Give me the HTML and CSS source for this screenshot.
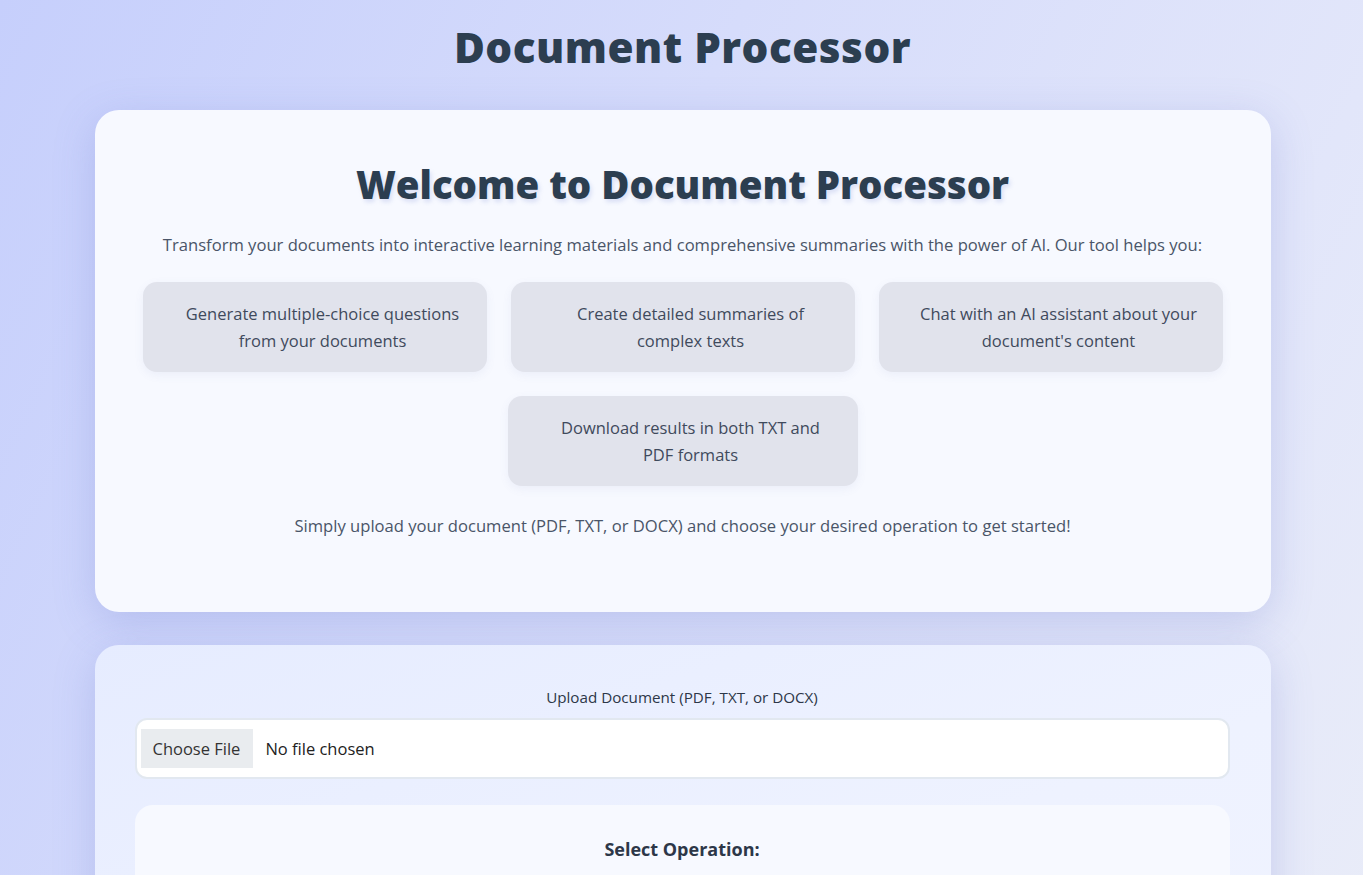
FILE: index.html
```html
<!DOCTYPE html>
<html lang="en">
<head>
<meta charset="utf-8">
<title>Document Processor</title>
<link rel="stylesheet" href="styles.css">
</head>
<body>
<div class="page">
  <h1 class="title">Document Processor</h1>

  <section class="card welcome">
    <h2 class="welcome-title">Welcome to Document Processor</h2>
    <p class="intro">Transform your documents into interactive learning materials and comprehensive summaries with the power of AI. Our tool helps you:</p>
    <ul class="features">
      <li class="feature">Generate multiple-choice questions from your documents</li>
      <li class="feature">Create detailed summaries of complex texts</li>
      <li class="feature">Chat with an AI assistant about your document's content</li>
      <li class="feature">Download results in both TXT and PDF formats</li>
    </ul>
    <p class="intro outro">Simply upload your document (PDF, TXT, or DOCX) and choose your desired operation to get started!</p>
  </section>

  <section class="card upload">
    <label class="upload-label" for="doc">Upload Document (PDF, TXT, or DOCX)</label>
    <input class="file-input" id="doc" type="file">
    <div class="ops">
      <h3 class="ops-title">Select Operation:</h3>
    </div>
  </section>
</div>
</body>
</html>
```
FILE: styles.css
```css
* { box-sizing: border-box; }

html, body {
  margin: 0;
  padding: 0;
}

body {
  min-height: 100vh;
  font-family: "Open Sans", "Noto Sans", sans-serif;
  color: #2d3748;
  background: linear-gradient(115deg, #c6cffc 0%, #d6dcfb 40%, #e2e6fa 75%, #eaedf8 100%);
}

.page {
  width: 1176px;
  margin: 0 auto;
  padding: 20px 0 40px;
  position: relative;
  left: 1px;
}

.title {
  margin: 0 0 36px;
  text-align: center;
  font-family: "Open Sans", sans-serif;
  font-weight: 800;
  font-size: 42.2px;
  line-height: 54px;
  color: #2c3e50;
  letter-spacing: 0.5px;
}

.card {
  border-radius: 24px;
  box-shadow: 0 10px 40px rgba(110, 125, 210, 0.28);
}

.welcome {
  background: #f7f9ff;
  padding: 48px 48px 73px;
  text-align: center;
}

.welcome-title {
  margin: 0 0 22px;
  font-family: "Open Sans", sans-serif;
  font-weight: 800;
  font-size: 38.4px;
  line-height: 52px;
  color: #2c3e50;
  text-shadow: 2px 3px 4px rgba(90, 110, 200, 0.18);
}

.intro {
  margin: 0;
  font-size: 16.6px;
  line-height: 26px;
  color: #4a5568;
}

.features {
  list-style: none;
  margin: 24px 0 24px;
  padding: 0;
  display: flex;
  flex-wrap: wrap;
  justify-content: center;
  gap: 24px;
}

.feature {
  flex: 1 1 300px;
  max-width: 350px;
  background: #e1e3ec;
  border-radius: 14px;
  padding: 18px 24px 18px 40px;
  font-size: 16.5px;
  line-height: 27px;
  color: #3f4a5c;
  box-shadow: 0 3px 10px rgba(100, 110, 180, 0.08);
}

.outro {
  margin-top: 27px;
}

.upload {
  margin-top: 33px;
  background: linear-gradient(160deg, #e6ecff 0%, #eef2ff 60%, #f0f3ff 100%);
  padding: 40px 41px 40px 40px;
  text-align: center;
}

.upload-label {
  display: block;
  margin-top: 2px;
  font-size: 15.2px;
  line-height: 20px;
  color: #2d3748;
}

.file-input {
  display: block;
  width: 100%;
  margin-top: 11px;
  padding: 9px 4px;
  background: #ffffff;
  border: 2px solid #e2e8f0;
  border-radius: 12px;
  font-family: "Open Sans", sans-serif;
  font-size: 16.5px;
  color: #222;
  text-align: left;
}

.file-input::file-selector-button {
  height: 39px;
  margin-right: 12px;
  padding: 0 13px 0 12px;
  border: none;
  border-radius: 0;
  background: #e9ecef;
  font-family: "Open Sans", sans-serif;
  font-size: 16.5px;
  color: #333;
}

.ops {
  margin-top: 26px;
  background: #f7f9ff;
  border-radius: 18px;
  padding: 32px 20px 40px;
  min-height: 200px;
}

.ops-title {
  margin: 0;
  font-size: 18px;
  font-weight: 700;
  line-height: 24px;
  color: #2d3748;
}
```
